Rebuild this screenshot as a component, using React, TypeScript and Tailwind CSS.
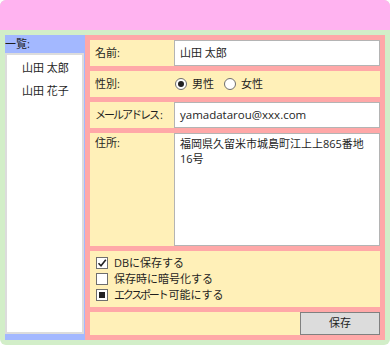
import React from "react";

const people = ["山田 太郎", "山田 花子"];

function Row({ label, top, className, children }: { label: React.ReactNode; top?: boolean; className: string; children: React.ReactNode }) {
  return (
    <div className={`flex bg-[#fff0b8] ${className}`}>
      <div className={`w-[84px] shrink-0 pl-[5px] flex ${top ? "items-start pt-[2px] leading-[15px]" : "items-center"}`}>
        {label}
      </div>
      {children}
    </div>
  );
}

function Check({ state, label }: { state: "on" | "off" | "mixed"; label: React.ReactNode }) {
  return (
    <div className="flex items-center h-[16px] gap-[6px]">
      <span className="w-[12px] h-[12px] bg-white border border-[#6e6e6e] flex items-center justify-center">
        {state === "on" && (
          <svg width="10" height="10" viewBox="0 0 10 10">
            <path d="M1.5 5.2 L4 7.8 L8.8 1.8" fill="none" stroke="#222" strokeWidth="1.6" />
          </svg>
        )}
        {state === "mixed" && <span className="w-[6px] h-[6px] bg-[#222]" />}
      </span>
      <span>{label}</span>
    </div>
  );
}

function Radio({ on, label }: { on?: boolean; label: string }) {
  return (
    <label className="flex items-center gap-[5px]">
      <span className="w-[12px] h-[12px] rounded-full bg-white border border-[#6e6e6e] flex items-center justify-center">
        {on && <span className="w-[6px] h-[6px] rounded-full bg-[#222]" />}
      </span>
      {label}
    </label>
  );
}

export default function App() {
  return (
    <div className="w-[390px] h-[345px] rounded-[6px] overflow-hidden bg-[#d2eec8] flex flex-col text-[11px] text-[#1e1e1e] font-['Open_Sans','Noto_Sans_CJK_JP',sans-serif]">
      <div className="h-[30px] shrink-0 bg-[#ffb3f0]" />

      <div className="flex flex-1 p-[5px]">
        {/* list */}
        <div className="w-[80px] shrink-0 bg-[#a3b8ff] flex flex-col pb-[6px]">
          <div className="h-[18px] leading-[18px]">一覧:</div>
          <div className="flex-1 bg-white border-2 border-[#dcdcdc] mr-[1px] pt-[1px]">
            {people.map((p) => (
              <div key={p} className="h-[23px] leading-[23px] pl-[15px]">
                {p}
              </div>
            ))}
          </div>
        </div>

        {/* form */}
        <div className="flex-1 bg-[#ffa8a8] p-[5px] flex flex-col gap-[5px]">
          <Row label="名前:" className="h-[26px]">
            <div className="flex-1 bg-white border border-[#b4b4b4] px-[5px] flex items-center">山田 太郎</div>
          </Row>
          <Row label="性別:" className="h-[26px]">
            <div className="flex items-center gap-[10px] pl-[1px]">
              <Radio on label="男性" />
              <Radio label="女性" />
            </div>
          </Row>
          <Row
            label={
              <span>
                <span className="tracking-[-2px]">メールアドレス</span>
                <span className="ml-[2px]">:</span>
              </span>
            }
            className="h-[26px]"
          >
            <div className="flex-1 bg-white border border-[#b4b4b4] px-[5px] flex items-center text-[11.5px]">yamadatarou@xxx.com</div>
          </Row>
          <Row label="住所:" top className="h-[113px]">
            <div className="flex-1 bg-white border border-[#b4b4b4] px-[5px] pt-[2px] leading-[15px]">
              福岡県久留米市城島町江上上865番地16号
            </div>
          </Row>
          <div className="h-[56px] bg-[#fff0b8] pl-[6px] pt-[4px]">
            <Check state="on" label="DBに保存する" />
            <Check state="off" label="保存時に暗号化する" />
            <Check
              state="mixed"
              label={
                <>
                  <span className="tracking-[-2.2px]">エクスポート</span>
                  <span className="ml-[2px]">可能にする</span>
                </>
              }
            />
          </div>
          <div className="h-[23px] bg-[#fff0b8] flex justify-end">
            <button className="w-[80px] h-full bg-[#dcdcdc] border border-[#808080]">保存</button>
          </div>
        </div>
      </div>
    </div>
  );
}
